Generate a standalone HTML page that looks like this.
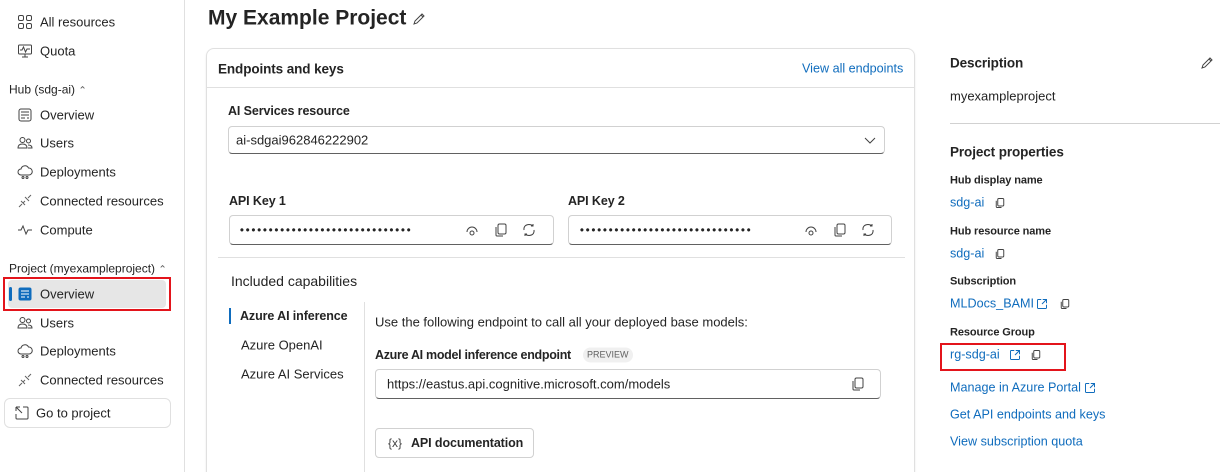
<!DOCTYPE html>
<html><head><meta charset="utf-8"><style>
*{margin:0;padding:0;box-sizing:border-box}
html,body{width:1226px;height:472px;overflow:hidden}
body{background:#fff;font-family:"Liberation Sans",sans-serif;color:#242424;position:relative;font-size:13px}
.a{position:absolute;white-space:nowrap;line-height:1}
.c{transform:translateY(-50%)}
.sb{font-weight:bold;font-size:12.5px;letter-spacing:-0.1px}
.lk{color:#0f6cbd;font-size:12.6px}
.ic{position:absolute;width:16px;height:16px}
.box{position:absolute;border:1px solid #d1d1d1;border-bottom-color:#616161;border-radius:4px;background:#fff}
.dots{font-size:11px;letter-spacing:1.9px;font-weight:bold;color:#242424}
svg{overflow:visible}
</style></head><body>
<!-- sidebar -->
<div style="position:absolute;left:184px;top:0;width:1px;height:472px;background:#e0e0e0"></div>
<svg class="ic" style="left:17px;top:14px" viewBox="0 0 16 16" fill="none" stroke="#424242"><rect x="1.5" y="1.5" width="5" height="5" rx="1.5"/><rect x="9.5" y="1.5" width="5" height="5" rx="1.5"/><rect x="1.5" y="9.5" width="5" height="5" rx="1.5"/><rect x="9.5" y="9.5" width="5" height="5" rx="1.5"/></svg>
<div class="a c" style="left:40px;top:22px">All resources</div>
<svg class="ic" style="left:17px;top:43px" viewBox="0 0 16 16" fill="none" stroke="#424242"><rect x="1.5" y="2" width="13" height="9" rx="1"/><path d="M3 7h2l1.5-3 2 5 1.5-3h3M5 14h6M8 11v3"/></svg>
<div class="a c" style="left:40px;top:51px">Quota</div>
<div class="a c" style="left:9px;top:90px;font-size:12px">Hub (sdg-ai) <span style="font-size:10px;color:#616161">⌃</span></div>
<svg class="ic" style="left:17px;top:107px" viewBox="0 0 16 16" fill="none" stroke="#424242"><rect x="2" y="2" width="12" height="12" rx="2"/><path d="M4 5h8M4 8h8M4 11h4M10 11h2"/></svg>
<div class="a c" style="left:40px;top:115px">Overview</div>
<svg class="ic" style="left:17px;top:135px" viewBox="0 0 16 16" fill="none" stroke="#424242"><circle cx="5.5" cy="5" r="2.5"/><circle cx="11.5" cy="6" r="2"/><path d="M1 13c0-3 2-4 4.5-4s4.5 1 4.5 4zM11 10c2 0 4 .5 4 3h-4"/></svg>
<div class="a c" style="left:40px;top:143px">Users</div>
<svg class="ic" style="left:17px;top:164px" viewBox="0 0 16 16" fill="none" stroke="#424242"><path d="M4 11a3 3 0 010-6 4 4 0 017.5-1A3 3 0 0112 11H4z"/><circle cx="6" cy="13.5" r="1"/><circle cx="10" cy="13.5" r="1"/></svg>
<div class="a c" style="left:40px;top:172px">Deployments</div>
<svg class="ic" style="left:17px;top:193px" viewBox="0 0 16 16" fill="none" stroke="#616161"><path d="M2 14l3-3M11 5l3-3M4 8l4 4M8 4l4 4M6 10l2-2"/></svg>
<div class="a c" style="left:40px;top:201px">Connected resources</div>
<svg class="ic" style="left:17px;top:222px" viewBox="0 0 16 16" fill="none" stroke="#424242"><path d="M1 8h3l2-4 3 8 2-4h4"/></svg>
<div class="a c" style="left:40px;top:230px">Compute</div>
<div class="a c" style="left:9px;top:269px;font-size:12px">Project (myexampleproject) <span style="font-size:10px;color:#616161">⌃</span></div>
<div style="position:absolute;left:3px;top:277px;width:168px;height:34px;border:2px solid #e3141b"></div>
<div style="position:absolute;left:8px;top:280px;width:158px;height:28px;background:#e6e6e6;border-radius:4px"></div>
<div style="position:absolute;left:9px;top:287px;width:3px;height:14px;background:#0f6cbd;border-radius:2px"></div>
<svg class="ic" style="left:17px;top:286px" viewBox="0 0 16 16"><rect x="1.5" y="1.5" width="13" height="13" rx="2" fill="#0f6cbd"/><path d="M4 5h8M4 8h8M4 11h4M10 11h2" stroke="#fff"/></svg>
<div class="a c" style="left:40px;top:294px">Overview</div>
<svg class="ic" style="left:17px;top:315px" viewBox="0 0 16 16" fill="none" stroke="#424242"><circle cx="5.5" cy="5" r="2.5"/><circle cx="11.5" cy="6" r="2"/><path d="M1 13c0-3 2-4 4.5-4s4.5 1 4.5 4zM11 10c2 0 4 .5 4 3h-4"/></svg>
<div class="a c" style="left:40px;top:323px">Users</div>
<svg class="ic" style="left:17px;top:343px" viewBox="0 0 16 16" fill="none" stroke="#424242"><path d="M4 11a3 3 0 010-6 4 4 0 017.5-1A3 3 0 0112 11H4z"/><circle cx="6" cy="13.5" r="1"/><circle cx="10" cy="13.5" r="1"/></svg>
<div class="a c" style="left:40px;top:351px">Deployments</div>
<svg class="ic" style="left:17px;top:372px" viewBox="0 0 16 16" fill="none" stroke="#616161"><path d="M2 14l3-3M11 5l3-3M4 8l4 4M8 4l4 4M6 10l2-2"/></svg>
<div class="a c" style="left:40px;top:380px">Connected resources</div>
<div style="position:absolute;left:4px;top:398px;width:167px;height:30px;border:1px solid #e0e0e0;border-radius:6px"></div>
<svg class="ic" style="left:14px;top:405px" viewBox="0 0 16 16" fill="none" stroke="#424242"><path d="M9 2h4a1 1 0 011 1v10a1 1 0 01-1 1H3a1 1 0 01-1-1V9M2 2l6 6M2 2v4M2 2h4"/></svg>
<div class="a c" style="left:36px;top:413px">Go to project</div>
<!-- main -->
<div class="a c" style="left:208px;top:18px;font-size:21px;font-weight:bold">My Example Project</div>
<svg class="ic" style="left:411px;top:11px" viewBox="0 0 16 16" fill="none" stroke="#424242"><path d="M3 13l1-3 7-7 2 2-7 7zM10 4l2 2"/></svg>
<div style="position:absolute;left:206px;top:48px;width:709px;height:440px;border:1px solid #e0e0e0;border-radius:8px;box-shadow:0 1px 2px rgba(0,0,0,.08)"></div>
<div class="a c sb" style="left:218px;top:69px;font-size:13.5px">Endpoints and keys</div>
<div class="a c lk" style="left:802px;top:69px">View all endpoints</div>
<div style="position:absolute;left:207px;top:87px;width:707px;height:1px;background:#e0e0e0"></div>
<div class="a c sb" style="left:228px;top:111px">AI Services resource</div>
<div class="box" style="left:228px;top:126px;width:657px;height:28px"></div>
<div class="a c" style="left:236px;top:140px">ai-sdgai962846222902</div>
<svg class="ic" style="left:862px;top:132px" viewBox="0 0 16 16" fill="none" stroke="#424242"><path d="M3 6l5 5 5-5"/></svg>
<div class="a c sb" style="left:229px;top:201px">API Key 1</div>
<div class="box" style="left:229px;top:215px;width:325px;height:30px"></div>
<div class="a c dots" style="left:240px;top:231px">••••••••••••••••••••••••••••••</div>
<div class="a c sb" style="left:568px;top:201px">API Key 2</div>
<div class="box" style="left:568px;top:215px;width:324px;height:30px"></div>
<div class="a c dots" style="left:580px;top:231px">••••••••••••••••••••••••••••••</div>
<svg class="ic" style="left:464px;top:223px" viewBox="0 0 16 16" fill="none" stroke="#424242"><path d="M3 9a5 5 0 0110 0"/><circle cx="8" cy="10" r="2"/></svg>
<svg class="ic" style="left:493px;top:222px" viewBox="0 0 16 16" fill="none" stroke="#424242"><rect x="5" y="2" width="8" height="10" rx="1.5"/><path d="M3 5v8a1 1 0 001 1h6"/></svg>
<svg class="ic" style="left:521px;top:222px" viewBox="0 0 16 16" fill="none" stroke="#424242"><path d="M4 4a6 6 0 018 0M12 12a6 6 0 01-8 0M3 8a5 5 0 011-4M13 8a5 5 0 01-1 4M12 2v2h-2M4 14v-2h2"/></svg>
<svg class="ic" style="left:803px;top:223px" viewBox="0 0 16 16" fill="none" stroke="#424242"><path d="M3 9a5 5 0 0110 0"/><circle cx="8" cy="10" r="2"/></svg>
<svg class="ic" style="left:832px;top:222px" viewBox="0 0 16 16" fill="none" stroke="#424242"><rect x="5" y="2" width="8" height="10" rx="1.5"/><path d="M3 5v8a1 1 0 001 1h6"/></svg>
<svg class="ic" style="left:860px;top:222px" viewBox="0 0 16 16" fill="none" stroke="#424242"><path d="M4 4a6 6 0 018 0M12 12a6 6 0 01-8 0M3 8a5 5 0 011-4M13 8a5 5 0 01-1 4M12 2v2h-2M4 14v-2h2"/></svg>
<div style="position:absolute;left:218px;top:257px;width:687px;height:1px;background:#e0e0e0"></div>
<div class="a c" style="left:231px;top:281px;font-size:14px">Included capabilities</div>
<div style="position:absolute;left:229px;top:308px;width:2px;height:16px;background:#0f6cbd"></div>
<div class="a c sb" style="left:240px;top:316px">Azure AI inference</div>
<div class="a c" style="left:241px;top:345px">Azure OpenAI</div>
<div class="a c" style="left:241px;top:374px">Azure AI Services</div>
<div style="position:absolute;left:364px;top:302px;width:1px;height:170px;background:#e0e0e0"></div>
<div class="a c" style="left:375px;top:322px">Use the following endpoint to call all your deployed base models:</div>
<div class="a c sb" style="left:375px;top:355px;letter-spacing:-0.3px">Azure AI model inference endpoint</div>
<div class="a c" style="left:583px;top:355px;font-size:9px;background:#f0f0f0;color:#616161;padding:3px 4px;border-radius:8px">PREVIEW</div>
<div class="box" style="left:375px;top:369px;width:506px;height:30px"></div>
<div class="a c" style="left:387px;top:384px">https://eastus.api.cognitive.microsoft.com/models</div>
<svg class="ic" style="left:850px;top:376px" viewBox="0 0 16 16" fill="none" stroke="#424242"><rect x="5" y="2" width="8" height="10" rx="1.5"/><path d="M3 5v8a1 1 0 001 1h6"/></svg>
<div style="position:absolute;left:375px;top:428px;width:159px;height:30px;border:1px solid #d1d1d1;border-radius:4px"></div>
<div class="a c" style="left:388px;top:443px;font-size:12px;color:#424242">{x}</div>
<div class="a c sb" style="left:411px;top:443px">API documentation</div>
<!-- right -->
<div class="a c sb" style="left:950px;top:63px;font-size:13.5px">Description</div>
<svg class="ic" style="left:1199px;top:55px" viewBox="0 0 16 16" fill="none" stroke="#424242"><path d="M3 13l1-3 7-7 2 2-7 7zM10 4l2 2"/></svg>
<div class="a c" style="left:950px;top:96px">myexampleproject</div>
<div style="position:absolute;left:950px;top:123px;width:270px;height:1px;background:#d1d1d1"></div>
<div class="a c sb" style="left:950px;top:152px;font-size:13.5px">Project properties</div>
<div class="a c sb" style="left:950px;top:181px;font-size:11px">Hub display name</div>
<div class="a c lk" style="left:950px;top:203px">sdg-ai</div>
<div class="a c sb" style="left:950px;top:232px;font-size:11px">Hub resource name</div>
<div class="a c lk" style="left:950px;top:254px">sdg-ai</div>
<div class="a c sb" style="left:950px;top:282px;font-size:11px">Subscription</div>
<div class="a c lk" style="left:950px;top:304px">MLDocs_BAMI</div>
<div class="a c sb" style="left:950px;top:333px;font-size:11px">Resource Group</div>
<div style="position:absolute;left:940px;top:343px;width:126px;height:28px;border:2px solid #e3141b"></div>
<div class="a c lk" style="left:950px;top:355px">rg-sdg-ai</div>
<div class="a c lk" style="left:950px;top:388px">Manage in Azure Portal</div>
<div class="a c lk" style="left:950px;top:415px">Get API endpoints and keys</div>
<div class="a c lk" style="left:950px;top:442px">View subscription quota</div>
<svg class="ic" style="left:994px;top:197px;width:12px;height:12px" viewBox="0 0 16 16" fill="none" stroke="#424242" stroke-width="1.3"><rect x="5" y="2" width="8" height="10" rx="1.5"/><path d="M3 5v8a1 1 0 001 1h6"/></svg>
<svg class="ic" style="left:994px;top:248px;width:12px;height:12px" viewBox="0 0 16 16" fill="none" stroke="#424242" stroke-width="1.3"><rect x="5" y="2" width="8" height="10" rx="1.5"/><path d="M3 5v8a1 1 0 001 1h6"/></svg>
<svg class="ic" style="left:1036px;top:298px;width:12px;height:12px" viewBox="0 0 16 16" fill="none" stroke="#0f6cbd" stroke-width="1.3"><path d="M7 2H3a1 1 0 00-1 1v10a1 1 0 001 1h10a1 1 0 001-1V9M9 2h5v5M14 2L8 8"/></svg>
<svg class="ic" style="left:1059px;top:298px;width:12px;height:12px" viewBox="0 0 16 16" fill="none" stroke="#424242" stroke-width="1.3"><rect x="5" y="2" width="8" height="10" rx="1.5"/><path d="M3 5v8a1 1 0 001 1h6"/></svg>
<svg class="ic" style="left:1009px;top:349px;width:12px;height:12px" viewBox="0 0 16 16" fill="none" stroke="#0f6cbd" stroke-width="1.3"><path d="M7 2H3a1 1 0 00-1 1v10a1 1 0 001 1h10a1 1 0 001-1V9M9 2h5v5M14 2L8 8"/></svg>
<svg class="ic" style="left:1030px;top:349px;width:12px;height:12px" viewBox="0 0 16 16" fill="none" stroke="#424242" stroke-width="1.3"><rect x="5" y="2" width="8" height="10" rx="1.5"/><path d="M3 5v8a1 1 0 001 1h6"/></svg>
<svg class="ic" style="left:1084px;top:382px;width:12px;height:12px" viewBox="0 0 16 16" fill="none" stroke="#0f6cbd" stroke-width="1.3"><path d="M7 2H3a1 1 0 00-1 1v10a1 1 0 001 1h10a1 1 0 001-1V9M9 2h5v5M14 2L8 8"/></svg>
</body></html>
